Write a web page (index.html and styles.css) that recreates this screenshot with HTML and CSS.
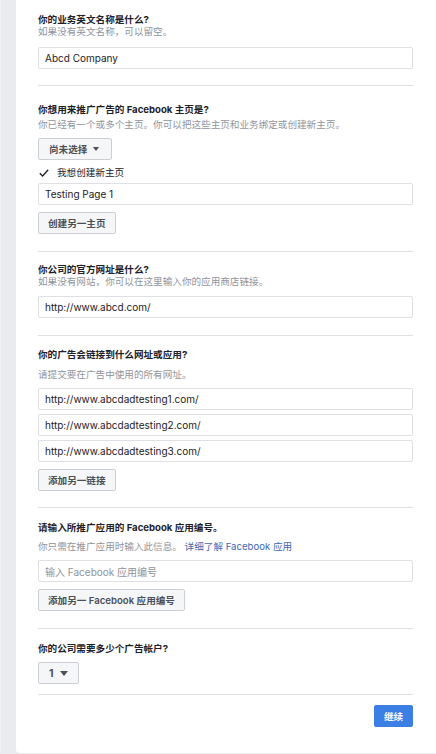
FILE: index.html
```html
<!DOCTYPE html>
<html lang="zh-CN">
<head>
<meta charset="utf-8">
<title>业务信息</title>
<link rel="stylesheet" href="styles.css">
</head>
<body>
<div class="page">
  <div class="strip"></div>
  <main class="card">
    <section class="sec s1">
      <div class="title">你的业务英文名称是什么?</div>
      <div class="sub">如果没有英文名称，可以留空。</div>
      <div class="input mt9">Abcd Company</div>
    </section>
    <hr class="div mt16">

    <section class="sec s2">
      <div class="title">你想用来推广广告的 <b>Facebook</b> 主页是?</div>
      <div class="sub mt3">你已经有一个或多个主页。你可以把这些主页和业务绑定或创建新主页。</div>
      <div class="row mt7"><button class="btn drop">尚未选择 <span class="caret"></span></button></div>
      <label class="check mt7">
        <svg class="tick" width="10" height="8" viewBox="0 0 10 8"><path d="M0.8 4.2 L3.6 7 L9.2 0.8" fill="none" stroke="#1d2129" stroke-width="1.3"/></svg>
        <span>我想创建新主页</span>
      </label>
      <div class="input mt4">Testing Page 1</div>
      <div class="row mt7"><button class="btn">创建另一主页</button></div>
    </section>
    <hr class="div mt17">

    <section class="sec s3">
      <div class="title">你公司的官方网址是什么?</div>
      <div class="sub">如果没有网站，你可以在这里输入你的应用商店链接。</div>
      <div class="input mt8">http://www.abcd.com/</div>
    </section>
    <hr class="div mt17">

    <section class="sec s4">
      <div class="title">你的广告会链接到什么网址或应用?</div>
      <div class="sub mt8">请提交要在广告中使用的所有网址。</div>
      <div class="input mt7">http://www.abcdadtesting1.com/</div>
      <div class="input mt4">http://www.abcdadtesting2.com/</div>
      <div class="input mt4">http://www.abcdadtesting3.com/</div>
      <div class="row mt7"><button class="btn">添加另一链接</button></div>
    </section>
    <hr class="div mt16">

    <section class="sec s5">
      <div class="title">请输入所推广应用的 <b>Facebook</b> 应用编号。</div>
      <div class="sub mt7">你只需在推广应用时输入此信息。 <a class="link">详细了解 Facebook 应用</a></div>
      <div class="input placeholder mt7">输入 Facebook 应用编号</div>
      <div class="row mt7"><button class="btn">添加另一 Facebook 应用编号</button></div>
    </section>
    <hr class="div mt17">

    <section class="sec s6">
      <div class="title">你的公司需要多少个广告帐户?</div>
      <div class="row mt7"><button class="btn drop num">1 <span class="caret big"></span></button></div>
    </section>
    <hr class="div mt10">

    <div class="actions">
      <button class="primary">继续</button>
    </div>
  </main>
</div>
</body>
</html>
```

FILE: styles.css
```css
* { box-sizing: border-box; }

html, body {
  margin: 0;
  padding: 0;
  background: #e9ebee;
}

body {
  font-family: "Inter", "Noto Sans CJK SC", sans-serif;
  font-size: 9.6px;
  color: #1d2129;
  height: 754px;
  overflow: hidden;
}

.page {
  display: flex;
  height: 753px;
}

.strip {
  width: 16px;
  flex: none;
  border-left: 1px solid #f1f2f4;
}

.card {
  flex: 1;
  background: #fff;
  border-bottom-left-radius: 4px;
  padding: 14px 23px 25px 22px;
}

.sec { display: flex; flex-direction: column; }

.s2 { margin-top: 18px; }
.s3 { margin-top: 12px; }
.s4 { margin-top: 13px; }
.s5 { margin-top: 14px; }
.s6 { margin-top: 14px; }

.title {
  font-weight: 700;
  line-height: 12px;
  color: #1d2129;
}

.title b { font-weight: 700; }

.sub {
  line-height: 12px;
  color: #90949c;
}

.link { color: #4267b2; text-decoration: none; }

.input {
  height: 22px;
  border: 1px solid #dddfe2;
  border-radius: 2px;
  padding: 0 6px;
  display: flex;
  align-items: center;
  color: #1d2129;
  font-size: 10px;
  background: #fff;
}

.input.placeholder { color: #90949c; }

.div {
  border: 0;
  border-top: 1px solid #dddfe2;
  margin-bottom: 0;
  margin-left: 0;
  margin-right: 0;
  height: 0;
}

.row { display: flex; }

.btn {
  font-family: inherit;
  font-size: 9.6px;
  font-weight: 600;
  color: #4b4f56;
  background: #f5f6f7;
  border: 1px solid #ccd0d5;
  border-radius: 2px;
  height: 22px;
  padding: 0 9px;
  display: inline-flex;
  align-items: center;
  cursor: pointer;
}

.btn.drop { padding: 0 12px 0 10px; gap: 6px; }

.btn.num { font-size: 10.5px; font-weight: 700; gap: 6px; padding: 0 10px 0 10px; }

.caret {
  display: inline-block;
  width: 0;
  height: 0;
  border-left: 3.5px solid transparent;
  border-right: 3.5px solid transparent;
  border-top: 4.5px solid #4b4f56;
}

.caret.big {
  border-left-width: 4.5px;
  border-right-width: 4.5px;
  border-top-width: 5px;
}

.check {
  display: flex;
  align-items: center;
  height: 12px;
  line-height: 12px;
  color: #1d2129;
}

.tick { margin-left: 1px; margin-right: 8px; }

.actions {
  display: flex;
  justify-content: flex-end;
  margin-top: 10px;
}

.primary {
  font-family: inherit;
  font-size: 9.6px;
  font-weight: 600;
  color: #fff;
  background: #3b7ee4;
  border: 1px solid #3b7ee4;
  border-radius: 2px;
  height: 22px;
  width: 39px;
  padding: 0;
  cursor: pointer;
}

.mt3 { margin-top: 3px; }
.mt4 { margin-top: 4px; }
.mt7 { margin-top: 7px; }
.mt8 { margin-top: 8px; }
.mt9 { margin-top: 9px; }
.mt10 { margin-top: 10px; }
.mt16 { margin-top: 16px; }
.mt17 { margin-top: 17px; }
```
